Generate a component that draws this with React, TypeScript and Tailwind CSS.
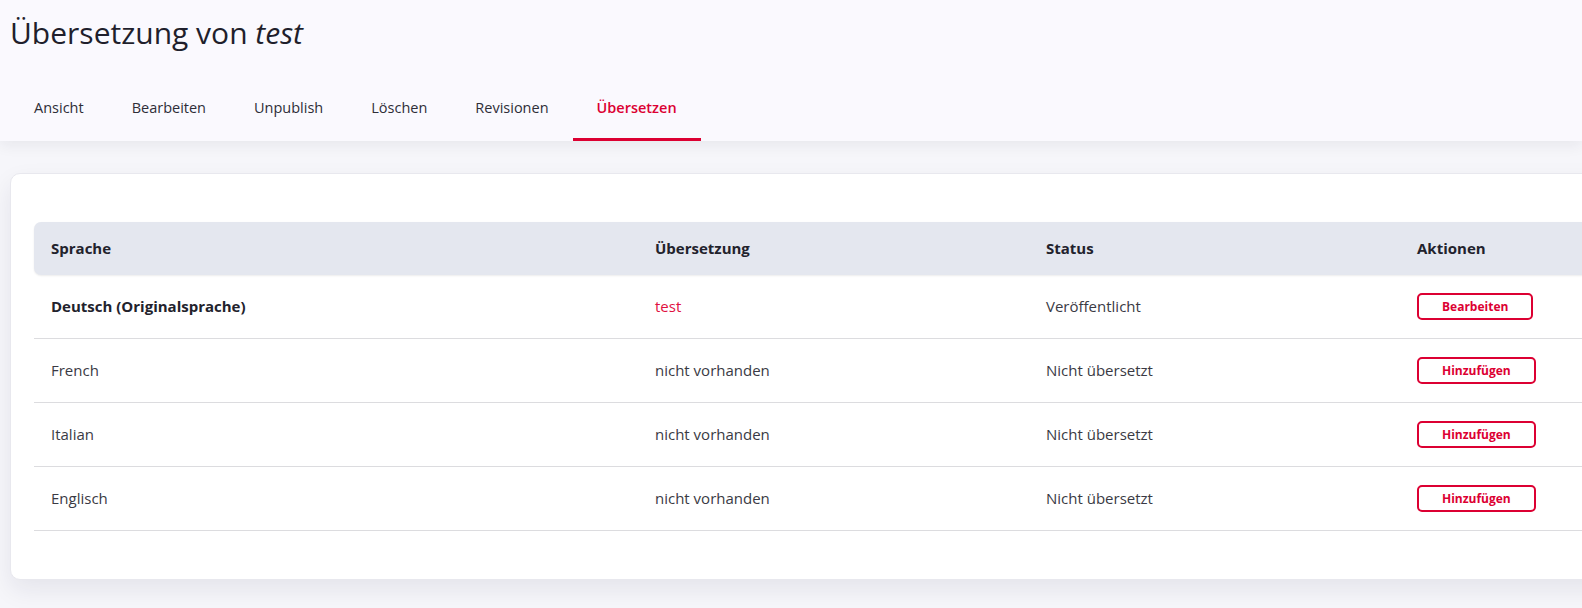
import React from "react";

const tabs = ["Ansicht", "Bearbeiten", "Unpublish", "Löschen", "Revisionen", "Übersetzen"];

const rows = [
  { lang: "Deutsch (Originalsprache)", bold: true, tr: "test", link: true, status: "Veröffentlicht", action: "Bearbeiten" },
  { lang: "French", bold: false, tr: "nicht vorhanden", link: false, status: "Nicht übersetzt", action: "Hinzufügen" },
  { lang: "Italian", bold: false, tr: "nicht vorhanden", link: false, status: "Nicht übersetzt", action: "Hinzufügen" },
  { lang: "Englisch", bold: false, tr: "nicht vorhanden", link: false, status: "Nicht übersetzt", action: "Hinzufügen" },
];

export default function App() {
  return (
    <div
      className="w-screen h-[608px] overflow-hidden bg-[#f6f6fa] text-[#3a3a44]"
      style={{ fontFamily: '"Open Sans", "Noto Sans", Arial, sans-serif' }}
    >
      <header className="relative z-10 bg-[#faf9fe] shadow-[0_4px_14px_rgba(30,30,60,0.07)]">
        <h1 className="pl-[10px] pt-[13px] text-[30px] leading-[40px] font-normal text-[#1f1f2c]">
          Übersetzung von <em className="italic">test</em>
        </h1>
        <nav className="mt-[25px] flex pl-[10px]">
          {tabs.map((t, i) => {
            const active = i === tabs.length - 1;
            return (
              <div
                key={t}
                className={
                  active
                    ? "h-[63px] px-6 flex items-center border-b-[3px] border-[#dc0032] text-[#dc0032] font-semibold text-[14.5px]"
                    : "h-[63px] px-6 flex items-center border-b-[3px] border-transparent text-[#2e2e38] text-[14.5px]"
                }
              >
                <span className="mt-[-1px]">{t}</span>
              </div>
            );
          })}
        </nav>
      </header>

      <main className="pt-[32px] pl-[10px]">
        <div className="w-[1640px] rounded-[10px] border border-[#e8e8ee] bg-white pt-[48px] pb-[48px] pl-[23px] shadow-[0_10px_25px_rgba(30,30,60,0.08)]">
          <div className="grid grid-cols-[604px_391px_371px_1fr] h-[53px] items-center bg-[#e4e7ef] rounded-l-[7px] shadow-[0_1px_2px_rgba(0,0,0,0.08)] text-[15px] font-bold text-[#22222c]">
            <div className="pl-[17px]">Sprache</div>
            <div className="pl-[17px]">Übersetzung</div>
            <div className="pl-[17px]">Status</div>
            <div className="pl-[17px]">Aktionen</div>
          </div>
          {rows.map((r) => (
            <div
              key={r.lang}
              className="grid grid-cols-[604px_391px_371px_1fr] h-[64px] items-center border-b border-[#dcdcdf] text-[15px]"
            >
              <div className={r.bold ? "pl-[17px] font-bold text-[#22222c]" : "pl-[17px]"}>{r.lang}</div>
              <div className={r.link ? "pl-[17px] text-[#e0103f]" : "pl-[17px]"}>{r.tr}</div>
              <div className="pl-[17px]">{r.status}</div>
              <div className="pl-[17px]">
                <button className="h-[27px] px-[23px] rounded-[5px] border-2 border-[#dc0032] text-[#dc0032] text-[12px] font-bold leading-none bg-white">
                  {r.action}
                </button>
              </div>
            </div>
          ))}
        </div>
      </main>
    </div>
  );
}
